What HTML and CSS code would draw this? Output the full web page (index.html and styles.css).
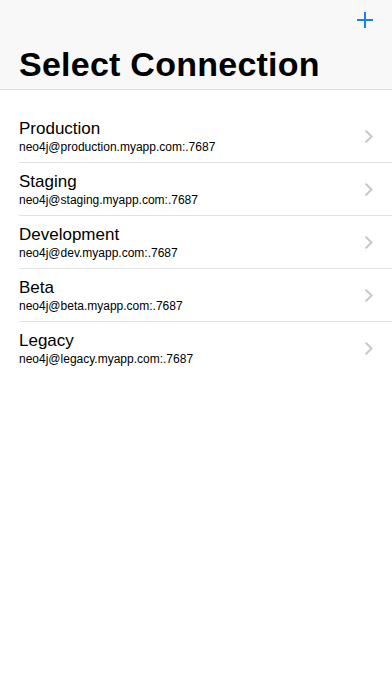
FILE: index.html
```html
<!DOCTYPE html>
<html lang="en">
<head>
<meta charset="utf-8">
<meta name="viewport" content="width=device-width, initial-scale=1">
<title>Select Connection</title>
<link rel="stylesheet" href="styles.css">
</head>
<body>
<header class="nav">
  <div class="nav-bar">
    <button class="add-btn" aria-label="Add connection">
      <svg width="16" height="16" viewBox="0 0 16 16"><path d="M8 0V16M0 8H16" stroke="#1a7ff7" stroke-width="2" fill="none"/></svg>
    </button>
  </div>
  <h1 class="large-title">Select Connection</h1>
</header>
<ul class="list">
  <li class="row"><div class="row-text"><div class="row-title">Production</div><div class="row-sub">neo4j@production.myapp.com:.7687</div></div><svg class="chev" width="8" height="13" viewBox="0 0 8 13"><path d="M1.2 1.2L6.6 6.5L1.2 11.8" stroke="#c7c7cc" stroke-width="1.9" fill="none" stroke-linecap="round" stroke-linejoin="round"/></svg></li>
  <li class="row"><div class="row-text"><div class="row-title">Staging</div><div class="row-sub">neo4j@staging.myapp.com:.7687</div></div><svg class="chev" width="8" height="13" viewBox="0 0 8 13"><path d="M1.2 1.2L6.6 6.5L1.2 11.8" stroke="#c7c7cc" stroke-width="1.9" fill="none" stroke-linecap="round" stroke-linejoin="round"/></svg></li>
  <li class="row"><div class="row-text"><div class="row-title">Development</div><div class="row-sub">neo4j@dev.myapp.com:.7687</div></div><svg class="chev" width="8" height="13" viewBox="0 0 8 13"><path d="M1.2 1.2L6.6 6.5L1.2 11.8" stroke="#c7c7cc" stroke-width="1.9" fill="none" stroke-linecap="round" stroke-linejoin="round"/></svg></li>
  <li class="row"><div class="row-text"><div class="row-title">Beta</div><div class="row-sub">neo4j@beta.myapp.com:.7687</div></div><svg class="chev" width="8" height="13" viewBox="0 0 8 13"><path d="M1.2 1.2L6.6 6.5L1.2 11.8" stroke="#c7c7cc" stroke-width="1.9" fill="none" stroke-linecap="round" stroke-linejoin="round"/></svg></li>
  <li class="row"><div class="row-text"><div class="row-title">Legacy</div><div class="row-sub">neo4j@legacy.myapp.com:.7687</div></div><svg class="chev" width="8" height="13" viewBox="0 0 8 13"><path d="M1.2 1.2L6.6 6.5L1.2 11.8" stroke="#c7c7cc" stroke-width="1.9" fill="none" stroke-linecap="round" stroke-linejoin="round"/></svg></li>
</ul>
</body>
</html>
```
FILE: styles.css
```css
html, body {
  margin: 0;
  padding: 0;
  background: #ffffff;
}
body {
  font-family: "Liberation Sans", Arial, sans-serif;
  color: #000;
  width: 392px;
  min-height: 696px;
}
.nav {
  background: #f8f8f8;
  border-bottom: 1px solid #dcdcdc;
  padding-bottom: 4px;
}
.nav-bar {
  height: 44px;
  display: flex;
  justify-content: flex-end;
  align-items: flex-start;
  padding: 12px 19px 0 0;
  box-sizing: border-box;
}
.add-btn {
  width: 16px;
  height: 16px;
  padding: 0;
  margin: 0;
  border: 0;
  background: none;
  display: block;
}
.add-btn svg { display: block; }
.large-title {
  margin: 0;
  padding: 0 0 0 19px;
  font-size: 34px;
  line-height: 41px;
  font-weight: 700;
  letter-spacing: 0.25px;
}
.list {
  list-style: none;
  margin: 0;
  padding: 20px 0 0 19px;
}
.row {
  display: flex;
  align-items: center;
  padding: 9px 19px 7px 0;
  border-bottom: 1px solid #e2e2e4;
}
.row:last-child {
  border-bottom-color: transparent;
}
.row-text {
  flex: 1;
  min-width: 0;
}
.row-title {
  font-size: 17px;
  line-height: 20px;
}
.row-sub {
  font-size: 12px;
  line-height: 16px;
}
.chev {
  display: block;
  flex: none;
  margin-top: -2px;
}
```
